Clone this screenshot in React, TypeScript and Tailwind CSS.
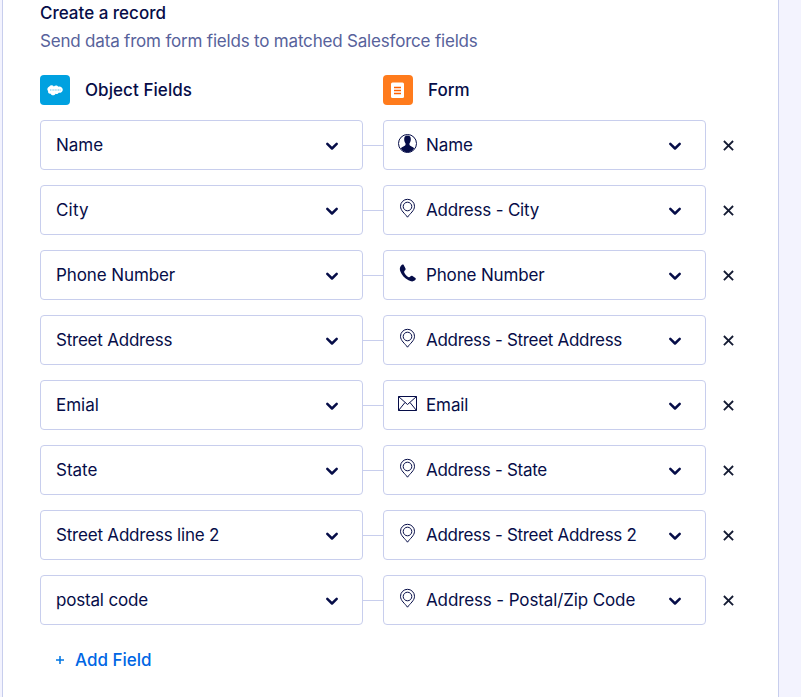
import React from "react";

type Kind = "person" | "pin" | "phone" | "mail";

type Row = { left: string; lt: string; right: string; rt: string; icon: Kind };

const rows: Row[] = [
  { left: "Name", lt: "", right: "Name", rt: "tracking-[-0.1px]", icon: "person" },
  { left: "City", lt: "tracking-[0.2px]", right: "Address - City", rt: "tracking-[-0.2px]", icon: "pin" },
  { left: "Phone Number", lt: "tracking-[-0.1px]", right: "Phone Number", rt: "tracking-[-0.15px]", icon: "phone" },
  { left: "Street Address", lt: "tracking-[-0.22px]", right: "Address - Street Address", rt: "tracking-[-0.3px]", icon: "pin" },
  { left: "Emial", lt: "", right: "Email", rt: "tracking-[-0.1px]", icon: "mail" },
  { left: "State", lt: "", right: "Address - State", rt: "tracking-[-0.29px]", icon: "pin" },
  { left: "Street Address line 2", lt: "tracking-[-0.2px]", right: "Address - Street Address 2", rt: "tracking-[-0.3px]", icon: "pin" },
  { left: "postal code", lt: "tracking-[-0.18px]", right: "Address - Postal/Zip Code", rt: "tracking-[-0.12px]", icon: "pin" },
];

function FieldIcon({ kind }: { kind: Kind }) {
  return (
    <svg className="-mt-1 mr-[9px] h-5 w-5 shrink-0" viewBox="0 0 20 20" fill="none" stroke="#060d48">
      {kind === "person" && (
        <>
          <circle cx="10.5" cy="10.5" r="9" strokeWidth="1" />
          <path
            d="M10.500 2.500C12.800 2.500 14 4 13.800 6.300C13.800 8.200 13.300 9.300 12.500 10.200V12C13 13.200 16 13.500 17.200 15.200C15.500 18 13.200 19.300 10.500 19.300S5.500 18 3.800 15.200C5 13.500 8 13.200 8.500 12V10.200C7.700 9.300 7.200 8.200 7.200 6.300C7 4 8.200 2.500 10.500 2.500Z"
            fill="#060d48"
            stroke="none"
          />
        </>
      )}
      {kind === "pin" && (
        <>
          <path d="M10.500 19.200C8 15.500 3.500 12.700 3.500 8.300a7 7 0 0 1 14 0c0 4.400-4.500 7.200-7 10.900z" />
          <circle cx="10.500" cy="8.500" r="4.300" />
        </>
      )}
      {kind === "phone" && (
        <path
          d="M4 2.800C4.800 1.900 6 1.100 6.700 1.900L8.500 5.400C8.900 6.300 8.400 7 7.600 7.700C7 8.300 7.100 9.200 7.500 10C8.400 11.700 9.600 13 11.200 13.900C12 14.400 12.700 14.300 13.300 13.600C14 12.800 14.700 12.500 15.500 13L18.400 14.900C19.300 15.600 18.600 16.700 17.600 17.600C16 18.900 13.600 18.500 11.500 17.300C7.500 15.100 4.700 12.200 3.400 8.600C2.600 6.400 2.600 4.300 4 2.800Z"
          fill="#060d48"
          stroke="none"
        />
      )}
      {kind === "mail" && (
        <>
          <path d="M1.500 3.500h18v14h-18z" />
          <path d="M1.500 3.500l9 8 9-8M1.500 17.500l6.500-8M19.500 17.500l-6.500-8" />
        </>
      )}
    </svg>
  );
}

function Chevron() {
  return (
    <svg className="mt-0.5 h-3 w-4 shrink-0" viewBox="0 0 16 12" fill="none">
      <path d="M3.300 3.900 8 8.500l4.700-4.600" stroke="#060d48" strokeWidth="2.500" strokeLinecap="round" strokeLinejoin="round" />
    </svg>
  );
}

const box = "flex h-[50px] w-[323px] items-center rounded-[4px] border border-[#c8ceed] bg-white pr-[22px]";

export default function App() {
  return (
    <div className="flex h-[697px] w-[801px] overflow-hidden bg-[#f3f3fe] pl-0.5 font-['Inter','Liberation_Sans',sans-serif] text-[17px] whitespace-nowrap text-[#060d48]">
      <main className="h-full w-[777px] border-x border-[#c8ceed] bg-white pl-[37px]">
        <h1 className="mt-px h-6 leading-6 font-medium">Create a record</h1>
        <p className="mt-1 h-6 leading-6 tracking-[-0.19px] text-[#57629b]">Send data from form fields to matched Salesforce fields</p>
        <div className="mt-[22px] flex h-[30px] items-center font-medium">
          <div className="flex w-[343px] items-center">
            <svg className="mr-[15px] h-[30px] w-[30px]" viewBox="0 0 30 30">
              <rect width="30" height="30" rx="4" fill="#00a1e0" />
              <path
                d="M9.300 11.400c1.200-1.400 3.500-1.400 4.600 0 1-1.400 3.500-1.400 4.400.3 1.900-.8 4.500.8 4.500 3 0 2-2.200 3.500-4.100 3.100-.7 1.200-2 1.600-3.200 1-.9 2-3.900 2.100-4.800 0-1.800.4-3-1.200-2.600-2.700-1.300-1.200-1-3.800 1.200-4.700z"
                fill="white"
              />
              <path d="M10 15h11" stroke="#00a1e0" strokeWidth="1.500" strokeDasharray="1 .6" opacity=".4" />
            </svg>
            <span className="pt-0.5 tracking-[0.07px]">Object Fields</span>
          </div>
          <svg className="mr-[15px] h-[30px] w-[30px]" viewBox="0 0 30 30">
            <rect width="30" height="30" rx="4" fill="#ff7b1c" />
            <rect x="8" y="7.500" width="13" height="15.500" rx="1.500" fill="white" />
            <path d="M11 12.500h7M11 15.500h7M11 18.500h7" stroke="#ff6100" strokeWidth="1.400" />
          </svg>
          <span className="pt-0.5">Form</span>
        </div>
        <div className="mt-[15px] flex flex-col gap-[15px]">
          {rows.map((r) => (
            <div key={r.left} className="flex items-center">
              <div className={box + " pl-[15px]"}>
                <span className={"grow pt-0.5 " + r.lt}>{r.left}</span>
                <Chevron />
              </div>
              <div className="mt-px h-px w-5 bg-[#c8ceed]" />
              <div className={box + " pl-[13px]"}>
                <FieldIcon kind={r.icon} />
                <span className={"grow pt-0.5 " + r.rt}>{r.right}</span>
                <Chevron />
              </div>
              <svg className="mt-px ml-4 h-3.5 w-3.5" viewBox="0 0 14 14">
                <path d="M1.900 2 11.100 11.200M11.100 2 1.900 11.200" stroke="#141b33" strokeWidth="1.800" />
              </svg>
            </div>
          ))}
        </div>
        <button className="mt-[23px] ml-[15px] flex h-6 items-center font-medium text-[#0066e4]">
          <svg className="mr-2.5 h-2.5 w-2.5" viewBox="0 0 10 10">
            <path d="M5 1v8M1 5h8" stroke="#0075e3" strokeWidth="1.500" />
          </svg>
          <span className="pt-0.5">Add Field</span>
        </button>
      </main>
    </div>
  );
}
